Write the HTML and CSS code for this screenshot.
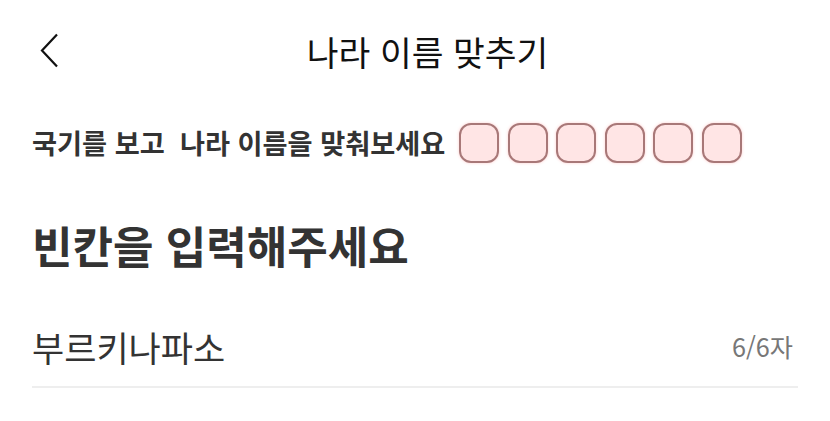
FILE: index.html
```html
<!DOCTYPE html>
<html lang="ko">
<head>
<meta charset="utf-8">
<title>나라 이름 맞추기</title>
<link rel="stylesheet" href="styles.css">
</head>
<body>
<div class="page">
  <header class="topbar">
    <button class="back" aria-label="뒤로">
      <svg width="20" height="36" viewBox="0 0 20 36"><polyline points="17,1.5 2,17.5 17,33.5" fill="none" stroke="#111" stroke-width="2.2" stroke-linejoin="miter"/></svg>
    </button>
    <h1 class="title">나라 이름 맞추기</h1>
  </header>
  <div class="quiz-row">
    <p class="hint">국기를 보고&nbsp; 나라 이름을 맞춰보세요</p>
    <div class="slots">
      <span class="slot"></span><span class="slot"></span><span class="slot"></span><span class="slot"></span><span class="slot"></span><span class="slot"></span>
    </div>
  </div>
  <h2 class="heading">빈칸을 입력해주세요</h2>
  <div class="field">
    <span class="value">부르키나파소</span>
    <span class="count">6/6자</span>
  </div>
</div>
</body>
</html>
```
FILE: styles.css
```css
* { box-sizing: border-box; }
html, body { margin: 0; padding: 0; background: #fff; }
body { font-family: "Noto Sans CJK KR", "Noto Sans", sans-serif; color: #333; }
.page { width: 830px; height: 421px; overflow: hidden; }
.topbar { display: flex; align-items: center; height: 103px; padding: 0 35px 0 40px; }
.back { border: 0; background: none; padding: 0; width: 20px; height: 36px; display: block; margin-top: -2px; }
.back svg { display: block; }
.title { flex: 1; margin: 0; text-align: center; font-size: 34.5px; font-weight: 400; color: #111; line-height: 1; }
.quiz-row { display: flex; align-items: center; padding: 0 32px; height: 80px; }
.hint { margin: 0; font-size: 27.2px; font-weight: 700; color: #333; white-space: pre; line-height: 1; }
.slots { display: flex; gap: 8.5px; margin-left: 14px; }
.slot { width: 40px; height: 40px; border: 2px solid #a87878; border-radius: 12px; background: #ffe5e5; box-shadow: 0 0 3px rgba(255, 140, 140, 0.45); }
.heading { margin: 22px 0 0; padding: 0 32px; height: 80px; display: flex; align-items: center; font-size: 44px; font-weight: 700; color: #333; line-height: 1; }
.field { margin: 0 32px; height: 103px; padding-top: 22px; display: flex; align-items: center; justify-content: space-between; border-bottom: 2px solid #eee; }
.value { font-size: 35px; color: #333; line-height: 1; }
.count { font-size: 25.2px; color: #777; line-height: 1; margin-right: 5px; }
```
